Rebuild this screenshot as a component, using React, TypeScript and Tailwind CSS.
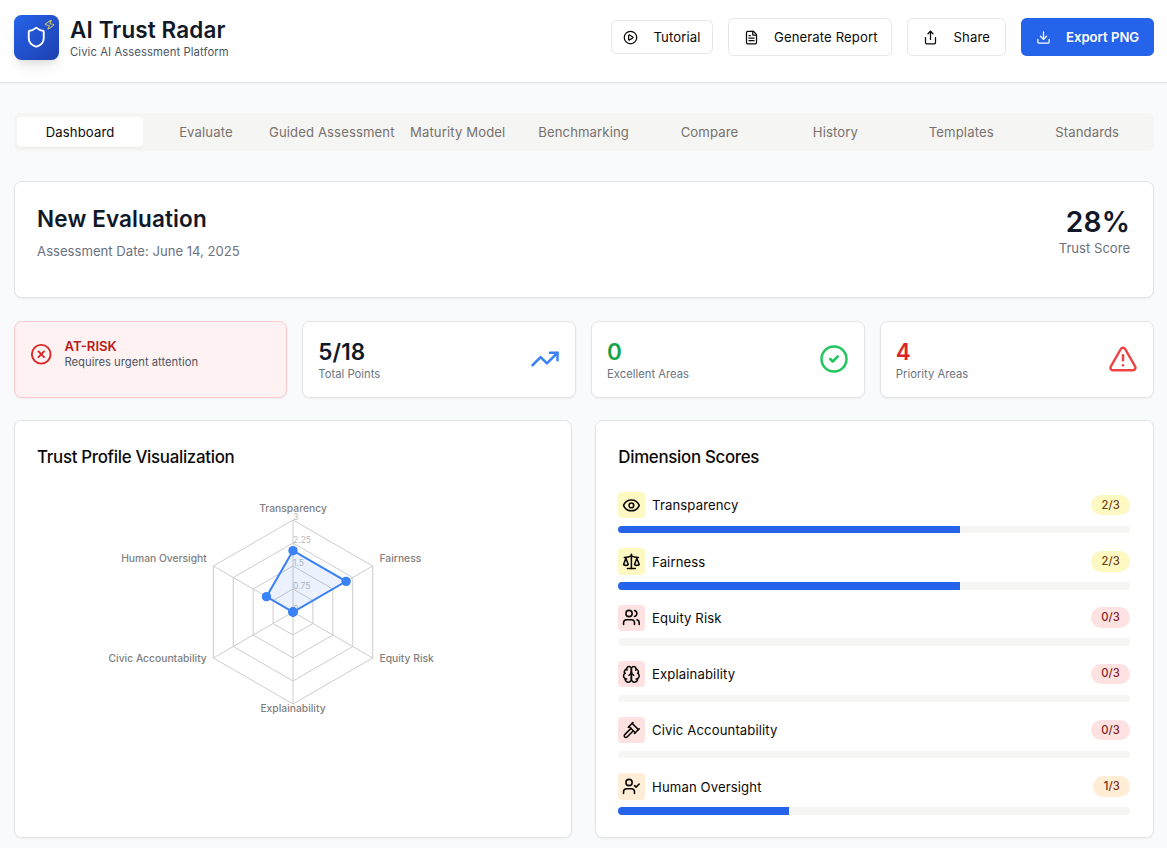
import React from "react"
import {
  AlertTriangle,
  CircleCheck,
  CircleX,
  Download,
  Eye,
  FileText,
  PlayCircle,
  Scale,
  Share,
  Shield,
  TrendingUp,
  UserCheck,
  Users,
  Zap,
} from "lucide-react"

type IconProps = { className?: string }

function strokeIcon(paths: string[]) {
  return function Icon({ className }: IconProps) {
    return (
      <svg
        viewBox="0 0 24 24"
        fill="none"
        stroke="currentColor"
        strokeWidth={2}
        strokeLinecap="round"
        strokeLinejoin="round"
        className={className}
      >
        {paths.map((d) => (
          <path key={d} d={d} />
        ))}
      </svg>
    )
  }
}

const BrainIcon = strokeIcon([
  "M12 5a3 3 0 1 0-5.997.125 4 4 0 0 0-2.526 5.77 4 4 0 0 0 .556 6.588A4 4 0 1 0 12 18Z",
  "M12 5a3 3 0 1 1 5.997.125 4 4 0 0 1 2.526 5.77 4 4 0 0 1-.556 6.588A4 4 0 1 1 12 18Z",
  "M15 13a4.5 4.5 0 0 1-3-4 4.5 4.5 0 0 1-3 4",
  "M17.599 6.5a3 3 0 0 0 .399-1.375",
  "M6.003 5.125A3 3 0 0 0 6.401 6.5",
  "M3.477 10.896a4 4 0 0 1 .585-.396",
  "M19.938 10.5a4 4 0 0 1 .585.396",
  "M6 18a4 4 0 0 1-1.967-.516",
  "M19.967 17.484A4 4 0 0 1 18 18",
])

const GavelIcon = strokeIcon([
  "m14.5 12.5-8 8a2.119 2.119 0 1 1-3-3l8-8",
  "m16 16 6-6",
  "m8 8 6-6",
  "m9 7 8 8",
  "m21 11-8-8",
])

const tabs = [
  "Dashboard",
  "Evaluate",
  "Guided Assessment",
  "Maturity Model",
  "Benchmarking",
  "Compare",
  "History",
  "Templates",
  "Standards",
]

const MAX_SCORE = 3

const dimensions = [
  { name: "Transparency", score: 2, icon: Eye },
  { name: "Fairness", score: 2, icon: Scale },
  { name: "Equity Risk", score: 0, icon: Users },
  { name: "Explainability", score: 0, icon: BrainIcon },
  { name: "Civic Accountability", score: 0, icon: GavelIcon },
  { name: "Human Oversight", score: 1, icon: UserCheck },
]

const scoreColors: Record<number, { box: string; badge: string }> = {
  0: { box: "bg-[#fee2e2]", badge: "bg-[#fee2e2] text-[#7f1d1d]" },
  1: { box: "bg-[#ffedd5]", badge: "bg-[#ffedd5] text-[#7c2d12]" },
  2: { box: "bg-[#fef9c3]", badge: "bg-[#fef9c3] text-[#713f12]" },
}

const card = "rounded-[7.5px] border border-[#e4e4e7] bg-white shadow-[0_1px_2px_rgba(0,0,0,0.05)]"

function Header() {
  const outline =
    "flex items-center rounded-[5.6px] border border-[#e5e7eb] bg-white pt-[1px] text-[13.125px] tracking-[0.12px] text-[#0c0a09]"

  return (
    <header className="flex h-[83px] items-start justify-between border-b border-[#e2e5ea] bg-white pt-[15px] pr-[13px] pl-[14px] shadow-[0_1px_2px_rgba(0,0,0,0.05)]">
      <div className="flex items-start gap-[11px]">
        <div className="relative flex size-[45px] items-center justify-center rounded-[7.5px] bg-linear-to-br from-[#2563eb] to-[#1e40af] shadow-[0_9px_14px_-3px_rgba(0,0,0,0.1),0_4px_6px_-4px_rgba(0,0,0,0.1)]">
          <Shield className="size-[22.5px] text-white" />
          <Zap className="absolute top-[3.5px] right-[3.75px] size-[11.25px] rotate-12 text-[#fde047] opacity-80" />
        </div>
        <div>
          <h1 className="text-[22.5px] leading-[30px] font-semibold tracking-[0.12px] text-[#111827]">AI Trust Radar</h1>
          <p className="text-[11.25px] leading-[15px] tracking-[0.1px] text-[#4b5563]">Civic AI Assessment Platform</p>
        </div>
      </div>

      <div className="flex h-[44px] items-center gap-[15px]">
        <button className={`${outline} h-[34px] w-[102px] gap-[15.5px] pl-[11px]`}>
          <PlayCircle className="size-[15px]" />
          Tutorial
        </button>
        <button className={`${outline} h-[38px] w-[164px] gap-[15px] pl-[15px]`}>
          <FileText className="size-[15px]" />
          Generate Report
        </button>
        <button className={`${outline} h-[38px] w-[99px] gap-[15.5px] pl-[15px]`}>
          <Share className="size-[15px]" />
          Share
        </button>
        <button className="flex h-[38px] w-[133px] items-center gap-[15px] rounded-[5.6px] bg-[#2563eb] pt-[1px] pl-[15px] text-[13.125px] font-semibold text-white">
          <Download className="size-[15px]" />
          Export PNG
        </button>
      </div>
    </header>
  )
}

function TabBar() {
  return (
    <nav className="grid h-[38px] grid-cols-9 rounded-[5.6px] bg-[#f5f5f4] px-[3.5px] py-1">
      {tabs.map((tab, i) => (
        <button
          key={tab}
          className={`flex items-center justify-center rounded-[4px] pt-[1px] text-[13.125px] tracking-[0.12px] whitespace-nowrap ${
            i === 0 ? "bg-white text-[#0c0a09] shadow-[0_1px_2px_rgba(0,0,0,0.06)]" : "text-[#78716c]"
          }`}
        >
          {tab}
        </button>
      ))}
    </nav>
  )
}

function Summary() {
  return (
    <section className={`${card} flex h-[117px] justify-between px-[22.5px] pt-[22px]`}>
      <div>
        <h2 className="text-[22.5px] leading-[30px] font-semibold tracking-[0.12px] text-[#111827]">New Evaluation</h2>
        <p className="mt-[7.5px] text-[13.125px] leading-[18.75px] text-[#6b7280]">Assessment Date: June 14, 2025</p>
      </div>
      <div className="pt-[0.5px] text-right">
        <div className="text-[28.125px] leading-[34px] font-semibold tracking-[0.2px] text-[#111827]">28%</div>
        <div className="text-[13.125px] leading-[18.75px] text-[#6b7280]">Trust Score</div>
      </div>
    </section>
  )
}

const stats = [
  { value: "5/18", label: "Total Points", color: "text-[#111827]", icon: TrendingUp, iconColor: "text-[#3b82f6]" },
  { value: "0", label: "Excellent Areas", color: "text-[#16a34a]", icon: CircleCheck, iconColor: "text-[#22c55e]" },
  { value: "4", label: "Priority Areas", color: "text-[#dc2626]", icon: AlertTriangle, iconColor: "text-[#ef4444]" },
]

function Stats() {
  return (
    <section className="grid h-[77px] grid-cols-4 gap-[15px]">
      <div className="flex gap-[12.4px] rounded-[7.5px] border border-[#fecaca] bg-[#fef2f2] px-[15px] pt-[15px] shadow-[0_1px_2px_rgba(0,0,0,0.05)]">
        <CircleX className="mt-[6px] size-[22.5px] text-[#dc2626]" />
        <div>
          <div className="text-[13.125px] leading-[18.75px] font-semibold text-[#b91c1c]">AT-RISK</div>
          <div className="text-[11.25px] leading-[13px] text-[#4b5563]">Requires urgent attention</div>
        </div>
      </div>
      {stats.map((stat) => (
        <div key={stat.label} className={`${card} flex items-center justify-between px-[15px]`}>
          <div>
            <div className={`text-[22.5px] leading-[30px] font-semibold tracking-[0.1px] ${stat.color}`}>
              {stat.value}
            </div>
            <div className="text-[11.25px] leading-[15px] text-[#6b7280]">{stat.label}</div>
          </div>
          <stat.icon className={`mb-[1px] size-[30px] ${stat.iconColor}`} />
        </div>
      ))}
    </section>
  )
}

const CX = 278
const CY = 120
const RADIUS = 92

function vertex(index: number, fraction: number) {
  const angle = (Math.PI / 3) * index - Math.PI / 2
  return [CX + RADIUS * fraction * Math.cos(angle), CY + RADIUS * fraction * Math.sin(angle)]
}

function ring(fractions: number[]) {
  return fractions.map((f, i) => vertex(i, f).join(",")).join(" ")
}

function RadarChart() {
  const values = dimensions.map((d) => d.score / MAX_SCORE)
  const labelPositions = [
    { x: 278, y: 20, anchor: "middle" },
    { x: 364.5, y: 70, anchor: "start" },
    { x: 364.5, y: 170, anchor: "start" },
    { x: 278, y: 220, anchor: "middle" },
    { x: 191.8, y: 170, anchor: "end" },
    { x: 191.8, y: 70, anchor: "end" },
  ] as const

  return (
    <svg className="block h-[300px] w-full">
      <g fill="none" stroke="#ccc">
        {dimensions.map((d, i) => {
          const [x, y] = vertex(i, 1)
          return <line key={d.name} x1={CX} y1={CY} x2={x} y2={y} />
        })}
        {[0.25, 0.5, 0.75, 1].map((f) => (
          <polygon key={f} points={ring(Array(6).fill(f))} />
        ))}
      </g>
      <g fontSize="10.3" fontWeight="500" fill="#808080">
        {dimensions.map((d, i) => (
          <text key={d.name} x={labelPositions[i].x} y={labelPositions[i].y} textAnchor={labelPositions[i].anchor}>
            {d.name}
          </text>
        ))}
      </g>
      <g fontSize="8.5" fill="#bbb">
        {["0", "0.75", "1.5", "2.25", "3"].map((tick, i) => (
          <text key={tick} x={CX} y={CY - i * 23}>
            {tick}
          </text>
        ))}
      </g>
      <polygon points={ring(values)} fill="#3b82f6" fillOpacity="0.1" stroke="#3b82f6" strokeWidth="2" />
      {values.map((v, i) => {
        const [x, y] = vertex(i, v)
        return <circle key={i} cx={x} cy={y} r="4.7" fill="#3b82f6" />
      })}
    </svg>
  )
}

function DimensionScores() {
  return (
    <div className="flex flex-col gap-[15px]">
      {dimensions.map((d) => (
        <div key={d.name}>
          <div className="flex h-[26.25px] items-center justify-between">
            <div className="flex items-center gap-[7.5px]">
              <div className={`rounded-[3.75px] p-[3.75px] ${scoreColors[d.score].box}`}>
                <d.icon className="size-[18.75px] text-[#0c0a09]" />
              </div>
              <span className="pt-[1.3px] text-[13.125px] leading-[18.75px] tracking-[0.12px] text-[#0c0a09]">
                {d.name}
              </span>
            </div>
            <span
              className={`flex h-[20.6px] items-center rounded-full px-[10.4px] text-[11.25px] font-medium ${scoreColors[d.score].badge}`}
            >
              {d.score}/{MAX_SCORE}
            </span>
          </div>
          <div className="mt-[7.5px] h-[7.5px] overflow-hidden rounded-full bg-[#f5f5f4]">
            <div className="h-full bg-[#2563eb]" style={{ width: `${(d.score / MAX_SCORE) * 100}%` }} />
          </div>
        </div>
      ))}
    </div>
  )
}

export default function App() {
  const title = "h-[48.5px] text-[16.875px] leading-[26.25px] font-[550] tracking-[-0.3px] text-[#0c0a09]"

  return (
    <div className="h-[848px] overflow-hidden bg-[#f9fafc] font-['Inter',sans-serif]">
      <Header />
      <main className="flex flex-col pt-[30px] pr-[13.4px] pl-[13.6px]">
        <TabBar />
        <div className="mt-[30px] flex flex-col gap-[23px]">
          <Summary />
          <Stats />
        </div>
        <section className="mt-[22px] grid h-[418px] grid-cols-2 gap-[22.5px]">
          <div className={`${card} pt-[22.5px]`}>
            <h3 className={`${title} pl-[22.5px]`}>Trust Profile Visualization</h3>
            <RadarChart />
          </div>
          <div className={`${card} px-[22.5px] pt-[22.5px]`}>
            <h3 className={title}>Dimension Scores</h3>
            <DimensionScores />
          </div>
        </section>
      </main>
    </div>
  )
}
